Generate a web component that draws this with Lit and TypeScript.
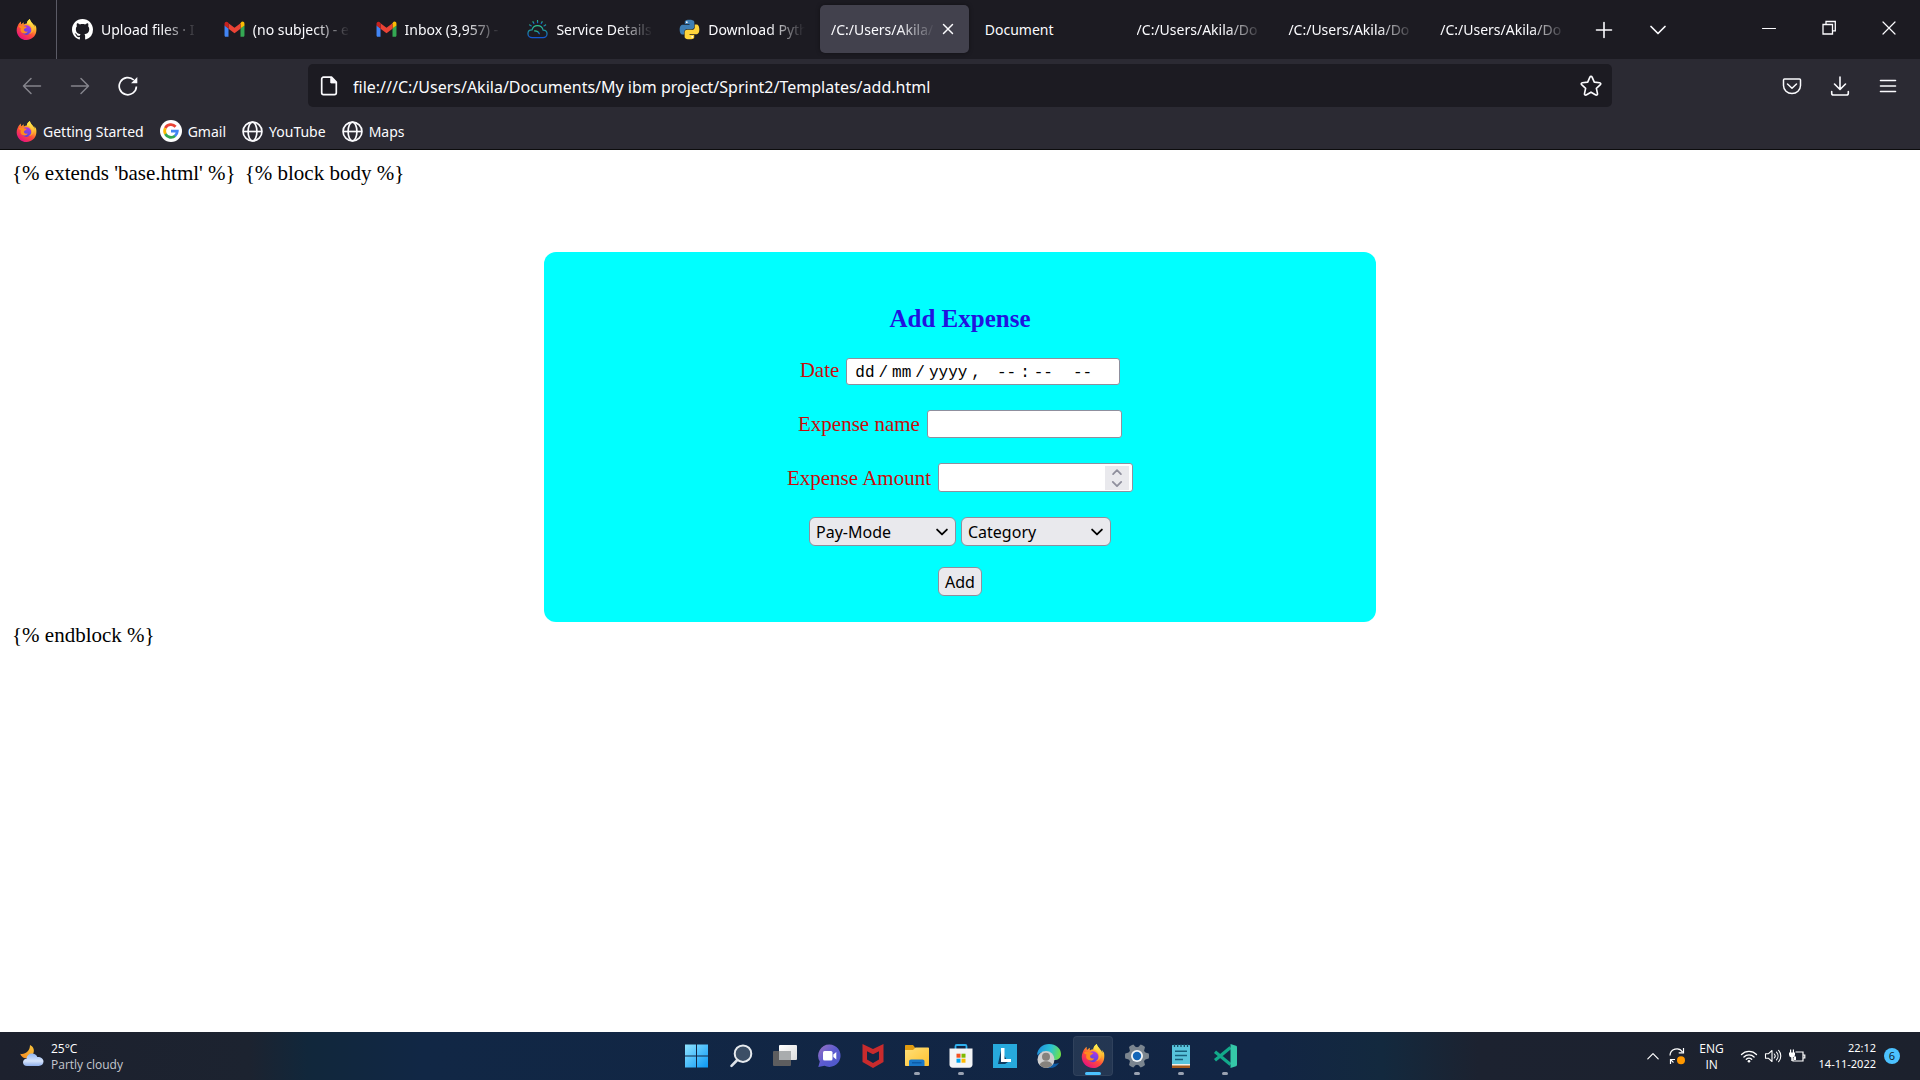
import { LitElement, html, css, svg, nothing, TemplateResult } from "lit";
import { customElement } from "lit/decorators.js";

/* ---------- Browser icons ---------- */

const firefox = (id: string) => html`<svg class="ico" viewBox="0 0 32 32" aria-hidden="true">
  <defs>
    <linearGradient id="${id}a" x1=".85" y1=".05" x2=".25" y2=".95">
      <stop offset="0" stop-color="#fff44f" /><stop offset=".3" stop-color="#ffb62b" />
      <stop offset=".6" stop-color="#ff4f38" /><stop offset="1" stop-color="#e6127f" />
    </linearGradient>
    <linearGradient id="${id}b" x1=".7" y1="0" x2=".3" y2="1">
      <stop offset="0" stop-color="#b833e1" /><stop offset=".5" stop-color="#7542e5" /><stop offset="1" stop-color="#5b3fd6" />
    </linearGradient>
    <linearGradient id="${id}c" x1="0" y1="0" x2="0" y2="1">
      <stop offset="0" stop-color="#fff44f" /><stop offset="1" stop-color="#ff9a2e" />
    </linearGradient>
  </defs>
  <path fill="url(#${id}a)" d="M30.6 11.8C29.900 10.200 28.600 8.400 27.500 7.900c.8 1.500 1.300 3.100 1.500 4.300C27.300 8 24.400 6.200 22 2.500 21.500 1.700 21.200.9 21.300 0c-3 1.500-4.600 4.600-4.800 7-1.700.1-3.300.6-4.600 1.500-.3-1.100-.4-2.300.1-3.600-1.600.7-2.900 1.900-3.900 3.100-.7-.8-.6-3.600-.5-4.200C6 4.900 3.500 8 2.500 10.500 1.500 12.500 1 14.800 1 17c0 8.300 6.700 15 15 15 7.500 0 13.700-5.400 14.800-12.500.5-3 .4-5.400-.2-7.700z" />
  <circle cx="16" cy="17" r="7.300" fill="url(#${id}b)" />
  <path fill="url(#${id}c)" d="M21.300 0c-3 1.500-4.600 4.600-4.800 7 3.500.3 7.300 3 7.400 8.500 0 3.500-2 6.500-5 7.500 5.500-.5 9-5 8.500-10.500C27 8.500 24 6 22 2.500 21.500 1.700 21.200.9 21.300 0z" />
  <path fill="#ff8a1f" d="M3.500 11.500c2.500-2 5.500-1.800 7.500-.9 1.500.7 4 .9 5.500 1.200-.3 1.400-1.700 2.200-3.200 2.700-1.400.5-1.500 2.500-.4 3.800 1.200 1.300 3.600 1.300 5 .3-.9 2.700-4 4.200-7 3.100-3.900-1.200-4.700-4.700-3.500-7.700-1.200-.5-2.600-1.300-3.900-2.500z" />
</svg>`;

const github = html`<svg class="ico" viewBox="0 0 16 16" fill="#fff" aria-hidden="true"><path d="M8 0C3.580 0 0 3.580 0 8c0 3.540 2.290 6.530 5.470 7.590.4.070.55-.17.55-.38 0-.19-.010-.82-.010-1.490-2.010.37-2.530-.49-2.690-.94-.090-.23-.48-.94-.82-1.130-.28-.15-.68-.52-.010-.53.63-.010 1.080.58 1.230.82.72 1.210 1.870.87 2.330.66.070-.52.28-.87.51-1.070-1.780-.2-3.640-.89-3.640-3.950 0-.87.31-1.590.82-2.150-.080-.2-.36-1.020.080-2.120 0 0 .67-.21 2.200.82.640-.18 1.320-.27 2-.27s1.360.090 2 .27c1.530-1.040 2.200-.82 2.200-.82.44 1.100.16 1.920.080 2.120.51.56.82 1.270.82 2.150 0 3.070-1.870 3.750-3.650 3.950.29.25.54.73.54 1.480 0 1.070-.010 1.930-.010 2.200 0 .21.15.46.55.38A8.010 8.010 0 0 0 16 8c0-4.420-3.580-8-8-8z" /></svg>`;

const gmail = html`<svg class="ico" viewBox="0 0 20 20" aria-hidden="true">
  <path fill="#4285f4" d="M1 17h3.300V9L.500 6v9.500C.500 16.300.800 17 1.600 17z" />
  <path fill="#34a853" d="M15.700 17h2.700c.8 0 1.100-.7 1.100-1.500V6l-3.800 3z" />
  <path fill="#fbbc04" d="M15.700 4v5.100l3.800-3V4.500c0-1.800-2-2.600-3.200-1.500z" />
  <path fill="#ea4335" d="M4.300 9.200V4L10 8.300 15.700 4v5.200L10 13.500z" />
  <path fill="#c5221f" d="M.5 4.500v1.700l3.800 3V4l-.6-.9C2.400 2 .5 2.700.5 4.500z" />
</svg>`;

const cloudSun = html`<svg class="ico" viewBox="0 0 22 20" fill="none" stroke-width="1.300" stroke-linecap="round" aria-hidden="true">
  <defs><linearGradient id="ibm" x1="0" y1="1" x2="0" y2="0"><stop offset="0" stop-color="#1458d4" /><stop offset=".5" stop-color="#1b8aa5" /><stop offset="1" stop-color="#2fc38f" /></linearGradient></defs>
  <g stroke="url(#ibm)">
    <path d="M5.500 18.500C2.900 18.500 1 16.800 1 14.500s1.800-4 4.200-4C6 7.500 8.300 6 11 6c3 0 5.200 1.800 5.900 4.600 2.400.1 4.100 1.700 4.100 3.900s-1.800 4-4.200 4z" />
    <path d="M8 11.500c2.500 0 4 1 4.900 3" /><path d="M11.010.8l.1 2" /><path d="M6.300 2l.9 1.700" /><path d="M15.800 2l-.9 1.700" /><path d="M2.800 5.300l1.700 1" /><path d="M19.500 5.300l-1.700 1" />
  </g></svg>`;

const python = html`<svg class="ico" viewBox="0 0 32 32" aria-hidden="true">
  <path fill="#3f7fb5" d="M15.800 1c-7.500 0-7 3.200-7 3.200v3.400h7.200v1H6S1 8 1 15.900s4.300 7.600 4.300 7.600H8v-3.700s-.1-4.300 4.200-4.300h7.200s4 .1 4-3.900V5s.6-4-7.600-4z" />
  <circle cx="11.900" cy="4.800" r="1.300" fill="#fff" />
  <path fill="#ffd43b" d="M16.200 31c7.500 0 7-3.200 7-3.200v-3.400H16v-1h10s5 .6 5-7.300-4.300-7.600-4.300-7.600H24v3.700s.1 4.300-4.200 4.300h-7.200s-4-.1-4 3.900V27s-.6 4 7.600 4z" />
  <circle cx="20.100" cy="27.200" r="1.300" fill="#fff" /></svg>`;

const google = html`<svg class="ico ico-g" viewBox="0 0 22 22" aria-hidden="true"><circle cx="11" cy="11" r="11" fill="#fff" />
  <g fill="none" stroke-width="2.800"><path stroke="#ea4335" d="M5.300 8.200A6.300 6.300 0 0 1 15.600 6.700" /><path stroke="#fbbc04" d="M5.500 14.100A6.300 6.300 0 0 1 5.300 8.200" /><path stroke="#34a853" d="M15.200 15.700A6.300 6.300 0 0 1 5.400 14" /><path stroke="#4285f4" d="M11 11.200h6.300A6.300 6.300 0 0 1 15 15.800" /></g></svg>`;

const globe = html`<svg class="ico" viewBox="0 0 20 20" fill="none" stroke="#fbfbfe" stroke-width="1.600" aria-hidden="true"><circle cx="10" cy="10" r="9" /><ellipse cx="10" cy="10" rx="4.200" ry="9" /><path d="M1 10h18" /></svg>`;

const line = (d: string, size = 20, w = 1.5) => html`<svg class="line" width=${size} height=${size} viewBox="0 0 20 20" fill="none" stroke="currentColor" stroke-width=${w} stroke-linecap="round" stroke-linejoin="round" aria-hidden="true"><path d=${d} /></svg>`;

const P = {
  plus: "M10 2.500v15M2.500 10h15",
  down: "M3 6.500l7 7 7-7",
  min: "M3.500 10.500h13",
  close: "M4 4l12 12M16 4L4 16",
  tabClose: "M5 5l10 10M15 5L5 15",
  back: "M18.500 10H1.500M9 2.500L1.500 10 9 17.500",
  fwd: "M1.500 10h17M11 2.500l7.500 7.500-7.500 7.500",
  star: "M10 1.200c.5 0 .8.300 1 .7l2 4.600 4.900.5c1 .1 1.300 1.100.6 1.800l-3.600 3.300 1 4.900c.2 1-.7 1.600-1.500 1.100L10 15.600l-4.400 2.500c-.8.5-1.700-.1-1.500-1.100l1-4.900-3.600-3.300C.8 8.100 1.100 7.100 2.100 7L7 6.500l2-4.600c.2-.4.500-.7 1-.7z",
  pocket: "M2.500 3h15c.6 0 1 .4 1 1v5.500c0 4.500-3.800 8-8.500 8s-8.500-3.500-8.500-8V4c0-.6.4-1 1-1zM5.500 8l4.500 4.300L14.500 8",
  download: "M10 1v12M4.500 8l5.500 5.500L15.500 8M1.700 15.500v1.700c0 1 .8 1.800 1.800 1.800h13c1 0 1.800-.8 1.800-1.800v-1.700",
  menu: "M2.500 4.500h15M2.500 10h15M2.500 15.500h15",
  up: "M3.500 13.500L10 7l6.500 6.500",
};

const reload = html`<svg class="line" width="20" height="20" viewBox="0 0 20 20" fill="none" stroke="currentColor" stroke-width="1.700" aria-hidden="true"><path d="M18.400 10.500A8.600 8.600 0 1 1 15.800 4" /><path d="M19.300 1v6.200h-6.200z" fill="currentColor" stroke="none" /></svg>`;
const restore = html`<svg class="line" width="16" height="16" viewBox="0 0 16 16" fill="none" stroke="currentColor" stroke-width="1.300" aria-hidden="true"><path d="M2 4.500h9.500V14H2zM5 4.500v-3h9.300v9.300h-2.800" /></svg>`;
const pageIcon = html`<svg class="line" width="18" height="20" viewBox="0 0 18 20" fill="none" stroke="currentColor" stroke-width="1.700" stroke-linejoin="round" aria-hidden="true"><path d="M3.500 1.200h8l4.800 4.900v10.700c0 1.100-.7 1.900-1.800 1.900h-11c-1.100 0-1.800-.8-1.800-1.900V3.100c0-1.100.7-1.900 1.800-1.900z" /><path d="M10.800 1.500v5.400h5.300z" fill="currentColor" stroke-width="1" /></svg>`;

/* ---------- Taskbar icons ---------- */

const windows = html`<svg class="app-ico" viewBox="0 0 24 24" aria-hidden="true"><defs><linearGradient id="win" x1="0" y1="0" x2="1" y2="1"><stop offset="0" stop-color="#8fe3ff" /><stop offset="1" stop-color="#0a98f5" /></linearGradient></defs><path fill="url(#win)" d="M0 .5h11v11H0zM12 .5h11v11H12zM0 12.500h11v11H0zM12 12.500h11v11H12z" /></svg>`;
const search = html`<svg class="app-ico" viewBox="0 0 24 24" fill="none" aria-hidden="true"><path d="M7.800 16.500L2.500 21.800" stroke="#dde2e8" stroke-width="2.600" stroke-linecap="round" /><circle cx="14" cy="9.700" r="8.300" fill="#3c4f66" stroke="#e6eaee" stroke-width="2" /></svg>`;
const taskView = html`<svg class="app-ico" viewBox="0 0 24 24" aria-hidden="true"><defs><linearGradient id="tv" x1="0" y1="0" x2="1" y2="1"><stop offset="0" stop-color="#fff" /><stop offset="1" stop-color="#dcdcdc" /></linearGradient></defs><rect x="6" y="1" width="18" height="15" rx="1" fill="url(#tv)" /><rect x="0" y="7" width="18" height="15" rx="1" fill="#5d5d5f" /><path d="M6 7h12v9H6z" fill="#a9acae" /></svg>`;
const chat = html`<svg class="app-ico" viewBox="0 0 24 24" aria-hidden="true"><defs><linearGradient id="ch" x1="0" y1="0" x2="1" y2="1"><stop offset="0" stop-color="#9a72c0" /><stop offset=".5" stop-color="#5c5bd0" /><stop offset="1" stop-color="#4a58c8" /></linearGradient></defs><path fill="url(#ch)" d="M12.500.500a11.200 11.200 0 1 1-5 21.300L1.300 23l1.500-5.500A11.200 11.200 0 0 1 12.500.5z" /><rect x="6" y="7" width="9.500" height="9.500" rx="1.500" fill="#fff" /><path d="M16.300 10.500l3-2.500v7.500l-3-2.500z" fill="#fff" /></svg>`;
const mcafee = html`<svg class="app-ico" viewBox="0 0 24 24" aria-hidden="true"><path fill="#c92b2d" d="M1.500 0L12 5 22.500 0v18L12 24 1.500 18zM6 7.300v8.200l6 3.400 6-3.400V7.300l-6 3z" /></svg>`;
const explorer = html`<svg class="app-ico" viewBox="0 0 24 24" aria-hidden="true"><defs><linearGradient id="fe" x1="0" y1="0" x2="1" y2="1"><stop offset="0" stop-color="#ffe07a" /><stop offset="1" stop-color="#ffc12e" /></linearGradient></defs><path fill="#e09b10" d="M0 2c0-.6.4-1 1-1h7l2 2.500V7H0z" /><path fill="url(#fe)" d="M0 6h8l2.500-2.500H23c.6 0 1 .4 1 1V21c0 .6-.4 1-1 1H1c-.6 0-1-.4-1-1z" /><path fill="#1a78c9" d="M4 22v-4.500c0-1.200.8-2 2-2h11.500c1.200 0 2 .8 2 2V22z" /><path fill="#0d5ca8" d="M7 18h9.500v1.500H7z" /></svg>`;
const store = html`<svg class="app-ico" viewBox="0 0 24 24" aria-hidden="true"><path d="M6.500 5.500V2.200c0-.7.500-1.200 1.200-1.200h8.600c.7 0 1.200.5 1.200 1.200v3.300" fill="none" stroke="#2eb0ee" stroke-width="1.800" /><path fill="#f3f4f6" d="M.5 4.500h23v16c0 1.900-1.300 3.200-3.200 3.200H3.700c-1.900 0-3.200-1.300-3.200-3.200z" /><path fill="#f25022" d="M7.500 9.700h4v4h-4z" /><path fill="#7fba00" d="M12.500 9.700h4v4h-4z" /><path fill="#00a4ef" d="M7.500 14.700h4v4h-4z" /><path fill="#ffb900" d="M12.500 14.700h4v4h-4z" /></svg>`;
const lApp = html`<svg class="app-ico" viewBox="0 0 24 24" aria-hidden="true"><path fill="#27a9dc" d="M0 0h24v24H0z" /><path fill="#0e3d63" d="M8 6L5 20h7l3-2z" /><path fill="#fff" d="M8 4h3.500v11H18v3H8z" /></svg>`;
const edge = html`<svg class="app-ico" viewBox="0 0 24 24" aria-hidden="true"><defs><linearGradient id="ed" x1="0" y1=".3" x2="1" y2=".5"><stop offset="0" stop-color="#1f8fe0" /><stop offset=".55" stop-color="#2bc3d2" /><stop offset="1" stop-color="#6fe04a" /></linearGradient></defs><path fill="#0f5ea8" d="M1 10c0 8 5 14 12 14 4 0 7-2 9-5-5 2-11 0-11-6z" /><path fill="url(#ed)" d="M0 11C.5 4.500 5.500 0 12 0c7 0 12 4.500 12 10 0 4-3 6-6.500 6S13 14 14 12 9 4 0 11z" /><circle cx="9" cy="15.500" r="8.500" fill="#cfcfcf" /><circle cx="9" cy="12.800" r="4" fill="#86827d" /><path fill="#86827d" d="M2.800 21.300c.5-3 3-4 6.200-4s5.700 1 6.200 4A8.500 8.500 0 0 1 9 24a8.500 8.500 0 0 1-6.200-2.700z" /></svg>`;
const teeth = [0, 60, 120, 180, 240, 300];
const settings = html`<svg class="app-ico" viewBox="0 0 24 24" aria-hidden="true"><circle cx="12" cy="12" r="9" fill="#7b858f" />${teeth.map((a) => svg`<path transform=${`rotate(${a + 30} 12 12)`} fill="#7b858f" d="M8.300 4.500L9.500.3c1.600-.4 3.400-.4 5 0l1.200 4.200z" />`)}<circle cx="12" cy="12" r="6" fill="#f2f4f6" /><circle cx="12" cy="12" r="4.200" fill="#1566b8" /></svg>`;
const notepad = html`<svg class="app-ico" viewBox="0 0 24 24" aria-hidden="true"><path fill="#a65a1b" d="M3 20h18v4H3z" /><path fill="#f4efe6" d="M3 20h18v1.500H3z" /><path fill="#58c4dc" d="M3 2c0-.6.4-1 1-1h16c.6 0 1 .4 1 1v18H3z" /><path stroke="#18607c" stroke-width="1.400" d="M6 7.200h12M6 11.500h12M6 15.500h8" /><path stroke="#174a63" stroke-width="1.300" d="M5.500 0v3M8.700 0v3M12 0v3M15.300 0v3M18.500 0v3" /></svg>`;
const code = html`<svg class="app-ico" viewBox="0 0 24 24" aria-hidden="true"><path fill="none" stroke="#12a98a" stroke-width="3.200" stroke-linejoin="round" d="M17.500 3.500L2 16.200M2 7.800l15.500 12.700" /><path fill="#35c8a8" d="M17.500 0L23 1.800c.6.200 1 .8 1 1.400v17.600c0 .6-.4 1.200-1 1.400L17.500 24z" /></svg>`;
const weather = html`<svg class="weather-ico" viewBox="0 0 24 22" aria-hidden="true"><defs><linearGradient id="mo" x1="0" y1="1" x2="1" y2="0"><stop offset="0" stop-color="#f58a1f" /><stop offset="1" stop-color="#f7c53c" /></linearGradient><linearGradient id="cl" x1="0" y1="0" x2="0" y2="1"><stop offset="0" stop-color="#8fb4f2" /><stop offset=".6" stop-color="#d6e4fb" /><stop offset="1" stop-color="#8eaeea" /></linearGradient></defs><path fill="url(#mo)" d="M10 0c3.500 1.500 5 5.500 3 9s-7 5.500-10 3.500C1.500 11.500.5 10 .3 8.800 5 10 10 6 10 0z" /><path fill="url(#cl)" d="M7 21c-2.500 0-4-1.600-4-3.700 0-2 1.500-3.400 3.500-3.600C6.800 10.500 9 8.500 12 8.500c2.600 0 4.600 1.400 5.300 3.600 3.500-.2 6.200 1.700 6.200 4.500 0 2.500-2 4.400-4.700 4.400z" /></svg>`;

/* ---------- Tray icons ---------- */

const sync = html`<svg class="line" width="20" height="20" viewBox="0 0 20 20" fill="none" stroke="#fff" stroke-width="1.200" aria-hidden="true"><path d="M3 9.500A6.800 6.800 0 0 1 15.500 6M16.500 2v4.800h-4.800M6.500 16.500A7 7 0 0 1 4 13.500M3.500 18v-4.500H8" /><circle cx="14" cy="14.300" r="4" fill="#ff9800" stroke="none" /></svg>`;
const wifi = html`<svg class="line" width="18" height="18" viewBox="0 0 18 18" fill="none" stroke="#fff" stroke-width="1.300" stroke-linecap="round" aria-hidden="true"><path d="M1.500 7.500a10.500 10.500 0 0 1 15 0M3.900 10a7.200 7.200 0 0 1 10.200 0M6.300 12.300a4 4 0 0 1 5.400 0" /><circle cx="9" cy="14.300" r="1.300" fill="#fff" stroke="none" /></svg>`;
const speaker = html`<svg class="line" width="18" height="18" viewBox="0 0 18 18" fill="none" stroke="#fff" stroke-width="1.100" stroke-linecap="round" stroke-linejoin="round" aria-hidden="true"><path d="M1.500 6.800h2.800L8 3.500v11L4.300 11.200H1.500zM10.300 7a3 3 0 0 1 0 4M12.500 5.200a5.600 5.600 0 0 1 0 7.600M14.600 3.400a8.300 8.300 0 0 1 0 11.200" /></svg>`;
const battery = html`<svg class="line" width="18" height="18" viewBox="0 0 18 18" fill="none" stroke="#fff" stroke-width="1.200" aria-hidden="true"><path d="M7.500 5H15v9H5v-3.500M15.500 8h1.300v3h-1.300" /><path fill="#fff" stroke="none" d="M1 5.500h6v2.300a2.600 2.600 0 0 1-2.300 2.600V14H3.300v-3.600A2.600 2.600 0 0 1 1 7.800zM2 2.500h1.200v3H2zM4.800 2.500H6v3H4.800zM6 9.500h2v3.500H6z" /></svg>`;

interface Tab { label: string; icon?: TemplateResult; active?: boolean }

const TABS: Tab[] = [
  { label: "Upload files · I", icon: github },
  { label: "(no subject) - e", icon: gmail },
  { label: "Inbox (3,957) -", icon: gmail },
  { label: "Service Details", icon: cloudSun },
  { label: "Download Pyth", icon: python },
  { label: "/C:/Users/Akila/", active: true },
  { label: "Document" },
  { label: "/C:/Users/Akila/Do" },
  { label: "/C:/Users/Akila/Do" },
  { label: "/C:/Users/Akila/Do" },
];

const BOOKMARKS = [
  { label: "Getting Started", icon: firefox("fxb") },
  { label: "Gmail", icon: google },
  { label: "YouTube", icon: globe },
  { label: "Maps", icon: globe },
];

const APPS: { name: string; icon: TemplateResult; running?: boolean; active?: boolean }[] = [
  { name: "Start", icon: windows },
  { name: "Search", icon: search },
  { name: "Task View", icon: taskView },
  { name: "Chat", icon: chat },
  { name: "McAfee", icon: mcafee },
  { name: "File Explorer", icon: explorer, running: true },
  { name: "Microsoft Store", icon: store, running: true },
  { name: "L", icon: lApp },
  { name: "Edge", icon: edge },
  { name: "Firefox", icon: firefox("fxt"), active: true },
  { name: "Settings", icon: settings, running: true },
  { name: "Notepad", icon: notepad, running: true },
  { name: "VS Code", icon: code, running: true },
];

const reset = css`
  * { box-sizing: border-box; }
  button { font: inherit; color: inherit; background: none; border: 0; padding: 0; margin: 0; display: flex; align-items: center; justify-content: center; }
  a { color: inherit; text-decoration: none; }
  svg { display: block; flex: none; }
`;

@customElement("browser-chrome")
export class BrowserChrome extends LitElement {
  static styles = [reset, css`
    :host { display: block; font: 14px/20px "Noto Sans", "Open Sans", sans-serif; color: #fbfbfe; background: #2b2a33; border-bottom: 1px solid #0c0c0d; }
    .titlebar { display: flex; height: 59px; background: #1c1b22; }
    .home { display: flex; align-items: center; justify-content: center; width: 57px; padding-right: 4px; border-right: 1px solid #5b5b66; }
    .ico { width: 21px; height: 21px; }
    .ico-g { width: 22px; height: 22px; }
    .tabs { display: flex; flex: 0 1 1521px; min-width: 0; padding-left: 1px; }
    .tab { flex: 1 1 0; min-width: 0; justify-content: flex-start; gap: 8px; margin: 5px 2px 6px 3px; padding: 0 10px 0 11px; border-radius: 5px; }
    .tab-active { background: #42414d; gap: 4px; padding-right: 12px; box-shadow: 0 0 4px rgba(0, 0, 0, 0.4); }
    .label { flex: 1; min-width: 0; padding-top: 2px; overflow: hidden; white-space: nowrap; text-align: left; mask-image: linear-gradient(to left, transparent 0, #000 36px); }
    .label-whole { mask-image: none; }
    .new-tab { width: 52px; }
    .all-tabs { width: 56px; }
    .window { display: flex; margin-left: auto; padding-right: 1px; }
    .window button { width: 60px; padding-bottom: 3px; }
    .toolbar { display: grid; grid-template-columns: 308px minmax(0, 1fr) 308px; padding: 5px 0 6px; }
    .nav, .actions { display: flex; align-items: center; }
    .nav { padding-left: 8px; }
    .nav button { width: 48px; height: 40px; }
    .nav .dim { color: #85848c; }
    .actions { justify-content: flex-end; padding-right: 8px; }
    .actions button { width: 48px; height: 40px; }
    .url { display: flex; align-items: center; height: 43px; padding: 0 10px 0 12px; gap: 15px; border-radius: 5px; background: #1c1b22; }
    .address { flex: 1; min-width: 0; height: 32px; padding: 2px 0 0; border: 0; outline: 0; background: none; color: #fbfbfe; font: 16px/30px "Noto Sans", "Open Sans", sans-serif; }
    .bookmarks { display: flex; align-items: center; gap: 16px; height: 36px; padding: 0 16px; }
    .bookmark { display: flex; align-items: center; gap: 6px; }
    .bookmark span { padding-top: 1px; }
  `];

  render() {
    return html`
      <div class="titlebar">
        <div class="home">${firefox("fxh")}</div>
        <div class="tabs" role="tablist">
          ${TABS.map((t) => html`<button class="tab ${t.active ? "tab-active" : ""}" role="tab" aria-selected=${t.active ? "true" : "false"}>
            ${t.icon ?? nothing}
            <span class="label ${t.label === "Document" ? "label-whole" : ""}">${t.label}</span>
            ${t.active ? line(P.tabClose, 18, 1.6) : nothing}
          </button>`)}
        </div>
        <button class="new-tab" aria-label="New tab">${line(P.plus, 20, 1.6)}</button>
        <button class="all-tabs" aria-label="List all tabs">${line(P.down, 20, 1.7)}</button>
        <div class="window">
          <button aria-label="Minimize">${line(P.min, 20, 1.1)}</button>
          <button aria-label="Restore">${restore}</button>
          <button aria-label="Close">${line(P.close, 20, 1.2)}</button>
        </div>
      </div>
      <div class="toolbar">
        <div class="nav">
          <button class="dim" aria-label="Back">${line(P.back)}</button>
          <button class="dim" aria-label="Forward">${line(P.fwd)}</button>
          <button aria-label="Reload">${reload}</button>
        </div>
        <div class="url">
          ${pageIcon}
          <input class="address" type="text" aria-label="Address" .value=${"file:///C:/Users/Akila/Documents/My ibm project/Sprint2/Templates/add.html"} />
          <button aria-label="Bookmark this page">${line(P.star, 22)}</button>
        </div>
        <div class="actions">
          <button aria-label="Save to Pocket">${line(P.pocket)}</button>
          <button aria-label="Downloads">${line(P.download, 20, 1.6)}</button>
          <button aria-label="Menu">${line(P.menu, 20, 1.6)}</button>
        </div>
      </div>
      <nav class="bookmarks">
        ${BOOKMARKS.map((b) => html`<a class="bookmark" href="#">${b.icon}<span>${b.label}</span></a>`)}
      </nav>`;
  }
}

@customElement("expense-page")
export class ExpensePage extends LitElement {
  static styles = [reset, css`
    :host { display: block; padding: 10px 10px 0; background: #fff; color: #000; font: 21px/26px "Liberation Serif", "Times New Roman", serif; }
    .template { margin: 0; padding: 0 2px; }
    .template-top { display: flex; gap: 9px; }
    .card { display: flex; flex-direction: column; align-items: center; gap: 21px; width: 44%; min-width: 480px; max-width: 832px; margin: 66px auto 0; padding: 52px 24px 26px; border-radius: 12px; background: #00ffff; }
    .title { margin: 0; color: #2213de; font-size: 25px; line-height: 30px; }
    .fields { display: flex; flex-direction: column; align-items: center; gap: 25px; margin-top: 3px; }
    .row { display: flex; align-items: center; gap: 7px; }
    .row label { color: #c80c0c; line-height: 22px; }
    .row-date { align-items: baseline; }
    .row-selects { gap: 5px; }
    .input { width: 195px; height: 28px; padding: 0 8px; border: 1px solid #8f8f9d; border-radius: 3px; background: #fff; color: #000; font: 16px/24px "Noto Sans", "Open Sans", sans-serif; }
    .date { width: 274px; height: 27px; padding-top: 2px; font: 16px/22px "Liberation Mono", monospace; }
    .number { display: flex; align-items: center; width: 195px; height: 29px; padding-right: 3px; border: 1px solid #8f8f9d; border-radius: 3px; background: #fff; }
    .amount { flex: 1; min-width: 0; height: 27px; border: 0; background: none; appearance: textfield; }
    .amount::-webkit-inner-spin-button { appearance: none; }
    .spin { display: flex; flex-direction: column; width: 24px; height: 24px; color: #8f8f9d; background: #e9e9ed; }
    .spin button { flex: 1; }
    .picker { display: grid; align-items: center; }
    .picker > * { grid-area: 1 / 1; }
    .picker .line { justify-self: end; margin-right: 7px; pointer-events: none; }
    .select { height: 29px; padding: 0 6px; appearance: none; border: 1px solid #8f8f9d; border-radius: 6px; background: #e9e9ed; color: #000; font: 16px/24px "Noto Sans", "Open Sans", sans-serif; }
    .mode { width: 147px; }
    .category { width: 150px; }
    .add { height: 29px; padding: 0 6px; border: 1px solid #8f8f9d; border-radius: 6px; background: #e9e9ed; color: #000; font: 16px/24px "Noto Sans", "Open Sans", sans-serif; }
  `];

  // Quarter-em and em spaces set the segments of the empty date apart.
  private readonly emptyDate = "dd\u2005/\u2005mm\u2005/\u2005yyyy\u2005,\u2003--\u2005:\u2005--\u2003\u2005--";

  render() {
    return html`
      <p class="template template-top"><span>{% extends 'base.html' %}</span><span>{% block body %}</span></p>
      <form class="card" @submit=${(e: Event) => e.preventDefault()}>
        <h3 class="title">Add Expense</h3>
        <div class="fields">
          <div class="row row-date"><label for="date">Date</label><input id="date" class="input date" type="text" .value=${this.emptyDate} /></div>
          <div class="row"><label for="name">Expense name</label><input id="name" class="input" type="text" /></div>
          <div class="row"><label for="amount">Expense Amount</label>
            <div class="number"><input id="amount" class="input amount" type="number" />
              <div class="spin"><button type="button" aria-label="Increase">${line(P.up, 12, 3)}</button><button type="button" aria-label="Decrease">${line(P.down, 12, 3)}</button></div>
            </div>
          </div>
          <div class="row row-selects">
            <div class="picker"><select class="select mode" aria-label="Pay-Mode"><option>Pay-Mode</option></select>${line(P.down, 14, 2.6)}</div>
            <div class="picker"><select class="select category" aria-label="Category"><option>Category</option></select>${line(P.down, 14, 2.6)}</div>
          </div>
        </div>
        <button class="add" type="submit">Add</button>
      </form>
      <p class="template">{% endblock %}</p>`;
  }
}

@customElement("task-bar")
export class TaskBar extends LitElement {
  static styles = [reset, css`
    :host { display: grid; grid-template-columns: minmax(0, 1fr) auto minmax(0, 1fr); height: 48px; color: #fff; font: 11px/16px "Noto Sans", "Open Sans", sans-serif; background: linear-gradient(90deg, #1d212e 0, #1c2330 13%, #11273b 16%, #112745 22%, #122544 66%, #13293e 72%, #1c2230 77%, #1c212d 100%); }
    .weather { justify-content: flex-start; gap: 7px; padding-left: 20px; text-align: left; }
    .weather-ico { width: 24px; height: 22px; }
    .weather-text { display: flex; flex-direction: column; padding-top: 2px; font: 12px/16px "Open Sans", "Noto Sans", sans-serif; }
    .muted { color: #c5c8cf; }
    .apps { display: flex; padding-left: 1px; }
    .app { position: relative; width: 40px; height: 40px; margin: 4px 2px; border-radius: 4px; }
    .app-active { background: rgba(255, 255, 255, 0.08); box-shadow: inset 0 0 0 1px rgba(255, 255, 255, 0.06); }
    .app-ico, .app .ico { width: 24px; height: 24px; }
    .mark { position: absolute; bottom: 1px; left: 50%; width: 6px; height: 3px; margin-left: -3px; border-radius: 2px; background: #9aa2b1; }
    .app-active .mark { width: 16px; margin-left: -8px; background: #4cc2ff; }
    .tray { display: flex; align-items: center; justify-content: flex-end; padding-right: 20px; }
    .tray-icon { width: 24px; height: 40px; }
    .lang { flex-direction: column; width: 48px; padding: 2px 2px 0 0; text-align: center; font: 12px/16px "Open Sans", "Noto Sans", sans-serif; }
    .clock { flex-direction: column; align-items: flex-end; margin: 0 8px 0 10px; }
    .badge { width: 16px; height: 16px; border-radius: 8px; background: #4cc2ff; color: #10222e; }
  `];

  render() {
    return html`
      <button class="weather">${weather}<span class="weather-text"><span>25°C</span><span class="muted">Partly cloudy</span></span></button>
      <div class="apps">
        ${APPS.map((a) => html`<button class="app ${a.active ? "app-active" : ""}" aria-label=${a.name}>${a.icon}${a.running || a.active ? html`<span class="mark"></span>` : nothing}</button>`)}
      </div>
      <div class="tray">
        <button class="tray-icon" aria-label="Show hidden icons">${line(P.up, 16, 1.5)}</button>
        <button class="tray-icon" aria-label="Update">${sync}</button>
        <button class="lang"><span>ENG</span><span>IN</span></button>
        <button class="tray-icon" aria-label="Network">${wifi}</button>
        <button class="tray-icon" aria-label="Volume">${speaker}</button>
        <button class="tray-icon" aria-label="Battery">${battery}</button>
        <button class="clock"><span>22:12</span><span>14-11-2022</span></button>
        <button class="badge">6</button>
      </div>`;
  }
}

@customElement("app-root")
export class AppRoot extends LitElement {
  static styles = css`
    :host { display: flex; flex-direction: column; min-height: 100vh; }
    .page { flex: 1; }
  `;

  render() {
    return html`<browser-chrome></browser-chrome><expense-page class="page"></expense-page><task-bar></task-bar>`;
  }
}
